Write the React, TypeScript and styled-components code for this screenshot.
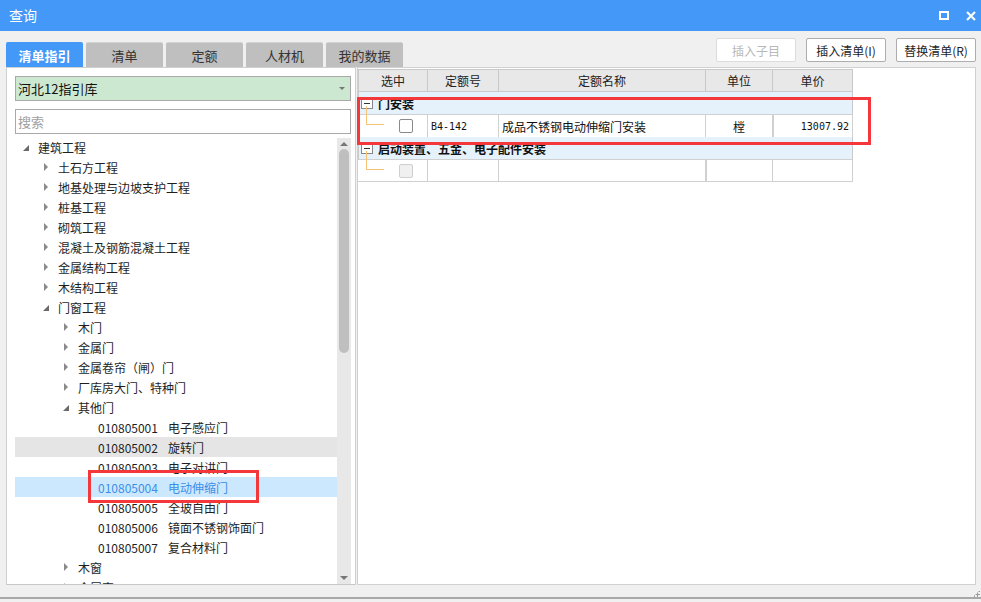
import React from "react";
import styled, { createGlobalStyle } from "styled-components";

const Global = createGlobalStyle`
  html, body { margin: 0; padding: 0; }
  body { font-family: "Noto Sans CJK SC", "Noto Sans", sans-serif; font-size: 12px; color: #1e1e1e; }
  * { box-sizing: border-box; }
`;

const Window = styled.div`
  width: 981px;
  height: 602px;
  background: #f0f0f0;
  display: flex;
  flex-direction: column;
  overflow: hidden;
  position: relative;
`;

const TitleBar = styled.div`
  height: 31px;
  background: #4499f8;
  display: flex;
  align-items: center;
  padding: 0 6px 0 9px;
  color: #fff;
  font-size: 14px;
`;

const Title = styled.div`
  flex: 1;
  line-height: 1;
  margin-top: -1px;
`;

const TitleIcons = styled.div`
  display: flex;
  align-items: center;
  gap: 17px;
  margin-right: -1px;
`;

const ToolRow = styled.div`
  height: 36px;
  display: flex;
  align-items: flex-end;
  padding: 0 5px 0 6px;
`;

const Tabs = styled.div`
  display: flex;
  gap: 3px;
  align-items: flex-end;
`;

const Tab = styled.div<{ $active?: boolean }>`
  width: 77px;
  height: 25px;
  display: flex;
  align-items: center;
  justify-content: center;
  background: ${(p) => (p.$active ? "#4499f8" : "#bfbfbf")};
  color: ${(p) => (p.$active ? "#fff" : "#333")};
  font-size: 13px;
  font-weight: ${(p) => (p.$active ? 700 : 400)};
  border-radius: 2px 2px 0 0;
  border-top: 1px solid ${(p) => (p.$active ? "#4499f8" : "#d2d2d2")};
`;

const Spacer = styled.div`flex: 1;`;

const Buttons = styled.div`
  display: flex;
  gap: 10px;
  align-self: flex-start;
  margin-top: 7px;
`;

const Btn = styled.div<{ $disabled?: boolean; $w: number }>`
  width: ${(p) => p.$w}px;
  height: 24px;
  display: flex;
  align-items: center;
  justify-content: center;
  background: #fff;
  border: 1px solid ${(p) => (p.$disabled ? "#dcdcdc" : "#adadad")};
  border-radius: 2px;
  color: ${(p) => (p.$disabled ? "#b8b8b8" : "#1e1e1e")};
  font-size: 12px;
`;

const Main = styled.div`
  height: 518px;
  display: flex;
  padding: 0 5px 0 6px;
  gap: 1px;
`;

const LeftPanel = styled.div`
  width: 350px;
  background: #fff;
  border: 1px solid #d0d0d0;
  border-bottom-color: #c8c8c8;
  display: flex;
  flex-direction: column;
  padding: 8px 4px 0 8px;
`;

const Select = styled.div`
  height: 25px;
  background: #cde8d0;
  border: 1px solid #a9a9a9;
  display: flex;
  align-items: center;
  padding: 0 5px 0 2px;
  font-size: 13px;
  color: #111;
`;

const Caret = styled.div`
  margin-left: auto;
  width: 0;
  height: 0;
  border-left: 3px solid transparent;
  border-right: 3px solid transparent;
  border-top: 3px solid #777;
`;

const Search = styled.div`
  height: 25px;
  margin-top: 8px;
  border: 1px solid #a9a9a9;
  display: flex;
  align-items: center;
  padding: 0 2px;
  color: #a0a0a0;
  font-size: 13px;
`;

const TreeWrap = styled.div`
  flex: 1;
  margin-top: 4px;
  display: flex;
  overflow: hidden;
  min-height: 0;
`;

const TreeList = styled.div`
  flex: 1;
  overflow: hidden;
  margin-top: -1px;
`;

const Row = styled.div<{ $level: number; $state?: "hover" | "sel" }>`
  height: 20px;
  display: flex;
  align-items: center;
  padding-left: ${(p) => 6 + p.$level * 20}px;
  background: ${(p) => (p.$state === "hover" ? "#e5e5e5" : p.$state === "sel" ? "#cce8ff" : "transparent")};
  color: ${(p) => (p.$state === "sel" ? "#3b8fe6" : "#1e1e1e")};
  font-size: 12px;
  white-space: nowrap;
`;

const Arrow = styled.span<{ $open?: boolean; $none?: boolean }>`
  width: 17px;
  height: 20px;
  flex: none;
  position: relative;
  &::before {
    content: "";
    display: ${(p) => (p.$none ? "none" : "block")};
    position: absolute;
    ${(p) =>
      p.$open
        ? `left: 2px; top: 8px; width: 0; height: 0;
           border-left: 6px solid transparent; border-bottom: 6px solid #6a6a6a;`
        : `left: 3px; top: 6px; width: 0; height: 0;
           border-top: 4px solid transparent; border-bottom: 4px solid transparent; border-left: 4px solid #8a8a8a;`}
  }
`;

const Code = styled.span`
  margin-right: 10px;
`;

const ScrollBar = styled.div`
  width: 14px;
  background: #e8e8e8;
  display: flex;
  flex-direction: column;
  align-items: center;
  padding: 4px 0;
`;

const ScrollArrow = styled.div<{ $down?: boolean }>`
  width: 0;
  height: 0;
  border-left: 4px solid transparent;
  border-right: 4px solid transparent;
  ${(p) => (p.$down ? "border-top: 4px solid #777;" : "border-bottom: 4px solid #777;")}
`;

const Thumb = styled.div`
  width: 10px;
  height: 204px;
  margin-top: 3px;
  background: #bfbfbf;
  border-radius: 5px;
`;

const RightPanel = styled.div`
  flex: 1;
  background: #fff;
  border: 1px solid #d0d0d0;
  padding-top: 1px;
`;

const Table = styled.div`
  width: 496px;
  display: grid;
  grid-template-columns: 70px 71px 207px 67px 80px;
`;

const HCell = styled.div`
  height: 23px;
  background: #e8e8e8;
  border: solid #c9c9c9;
  border-width: 1px 1px 1px 0;
  display: flex;
  align-items: center;
  justify-content: center;
  font-size: 12px;
  color: #222;
  &:first-child { border-left-width: 1px; }
`;

const GroupRow = styled.div`
  grid-column: 1 / -1;
  height: 22px;
  background: #e5f2fc;
  border-left: 1px solid #c9c9c9;
  border-right: 1px solid #c9c9c9;
  display: flex;
  align-items: center;
  padding-left: 2px;
  font-weight: 700;
  font-size: 12px;
  color: #111;
`;

const MinusBox = styled.div`
  width: 12px;
  height: 11px;
  border: 1px solid #888;
  background: #fff;
  margin-right: 5px;
  position: relative;
  &::after {
    content: "";
    position: absolute;
    left: 2px;
    right: 2px;
    top: 4px;
    height: 1px;
    background: #333;
  }
`;

const Cell = styled.div<{ $align?: "left" | "center" | "right"; $mono?: boolean }>`
  height: 23px;
  border: solid #d0d0d0;
  border-width: 1px 1px 0 0;
  display: flex;
  align-items: center;
  justify-content: ${(p) => (p.$align === "right" ? "flex-end" : p.$align === "center" ? "center" : "flex-start")};
  padding: 0 3px;
  font-family: ${(p) => (p.$mono ? `"DejaVu Sans Mono", "Liberation Mono", monospace` : `"Noto Sans CJK SC", sans-serif`)};
  font-size: ${(p) => (p.$mono ? "10px" : "12px")};
  color: #111;
  position: relative;
  &:nth-child(5n + 1) { border-left-width: 1px; }
`;

const LastRowCell = styled(Cell)`
  border-bottom-width: 1px;
`;

const Connector = styled.div`
  position: absolute;
  left: 8px;
  top: -9px;
  width: 18px;
  height: 19px;
  border-left: 1px solid #f5c277;
  border-bottom: 1px solid #f5c277;
`;

const Check = styled.div<{ $disabled?: boolean }>`
  width: 14px;
  height: 14px;
  margin-left: 38px;
  border: 1px solid ${(p) => (p.$disabled ? "#cfcfcf" : "#8a8a8a")};
  border-radius: 2px;
  background: ${(p) => (p.$disabled ? "#f0f0f0" : "#fff")};
`;

const Footer = styled.div`
  flex: 1;
  position: relative;
  padding-bottom: 3px;
  display: flex;
  flex-direction: column;
`;

const FooterLine = styled.div`
  margin-top: auto;
  height: 2px;
  background: #a8a8a8;
`;

const Grip = styled.div`
  position: absolute;
  right: 1px;
  bottom: 5px;
  width: 7px;
  height: 7px;
  background:
    radial-gradient(circle, #999 0 1px, transparent 1.2px) 0 0 / 3px 3px;
  clip-path: polygon(100% 0, 100% 100%, 0 100%);
`;

const RedBox = styled.div<{ $x: number; $y: number; $w: number; $h: number }>`
  position: absolute;
  left: ${(p) => p.$x}px;
  top: ${(p) => p.$y}px;
  width: ${(p) => p.$w}px;
  height: ${(p) => p.$h}px;
  border: 3px solid #f3373a;
  pointer-events: none;
`;

type Node = { label: string; level: number; code?: string; open?: boolean; leaf?: boolean; state?: "hover" | "sel" };

const tree: Node[] = [
  { label: "建筑工程", level: 0, open: true },
  { label: "土石方工程", level: 1 },
  { label: "地基处理与边坡支护工程", level: 1 },
  { label: "桩基工程", level: 1 },
  { label: "砌筑工程", level: 1 },
  { label: "混凝土及钢筋混凝土工程", level: 1 },
  { label: "金属结构工程", level: 1 },
  { label: "木结构工程", level: 1 },
  { label: "门窗工程", level: 1, open: true },
  { label: "木门", level: 2 },
  { label: "金属门", level: 2 },
  { label: "金属卷帘（闸）门", level: 2 },
  { label: "厂库房大门、特种门", level: 2 },
  { label: "其他门", level: 2, open: true },
  { code: "010805001", label: "电子感应门", level: 3, leaf: true },
  { code: "010805002", label: "旋转门", level: 3, leaf: true, state: "hover" },
  { code: "010805003", label: "电子对讲门", level: 3, leaf: true },
  { code: "010805004", label: "电动伸缩门", level: 3, leaf: true, state: "sel" },
  { code: "010805005", label: "全玻自由门", level: 3, leaf: true },
  { code: "010805006", label: "镜面不锈钢饰面门", level: 3, leaf: true },
  { code: "010805007", label: "复合材料门", level: 3, leaf: true },
  { label: "木窗", level: 2 },
  { label: "金属窗", level: 2 },
];

export default function App() {
  return (
    <>
      <Global />
      <Window>
        <TitleBar>
          <Title>查询</Title>
          <TitleIcons>
            <svg width="10" height="9" viewBox="0 0 10 9">
              <rect x="1" y="1" width="8" height="7" fill="none" stroke="#fff" strokeWidth="2" />
            </svg>
            <svg width="10" height="10" viewBox="0 0 10 10">
              <path d="M1 1L9 9M9 1L1 9" stroke="#fff" strokeWidth="2" />
            </svg>
          </TitleIcons>
        </TitleBar>
        <ToolRow>
          <Tabs>
            <Tab $active>清单指引</Tab>
            <Tab>清单</Tab>
            <Tab>定额</Tab>
            <Tab>人材机</Tab>
            <Tab>我的数据</Tab>
          </Tabs>
          <Spacer />
          <Buttons>
            <Btn $disabled $w={80}>插入子目</Btn>
            <Btn $w={80}>插入清单(I)</Btn>
            <Btn $w={80}>替换清单(R)</Btn>
          </Buttons>
        </ToolRow>
        <Main>
          <LeftPanel>
            <Select>
              河北12指引库
              <Caret />
            </Select>
            <Search>搜索</Search>
            <TreeWrap>
              <TreeList>
                {tree.map((n, i) => (
                  <Row key={i} $level={n.level} $state={n.state}>
                    <Arrow $open={n.open} $none={n.leaf} />
                    {n.code && <Code>{n.code}</Code>}
                    {n.label}
                  </Row>
                ))}
              </TreeList>
              <ScrollBar>
                <ScrollArrow />
                <Thumb />
                <Spacer />
                <ScrollArrow $down />
              </ScrollBar>
            </TreeWrap>
          </LeftPanel>
          <RightPanel>
            <Table>
              <HCell>选中</HCell>
              <HCell>定额号</HCell>
              <HCell>定额名称</HCell>
              <HCell>单位</HCell>
              <HCell>单价</HCell>
              <GroupRow>
                <MinusBox />
                门安装
              </GroupRow>
              <Cell>
                <Connector />
                <Check />
              </Cell>
              <Cell $mono>B4-142</Cell>
              <Cell>成品不锈钢电动伸缩门安装</Cell>
              <Cell $align="center">樘</Cell>
              <Cell $align="right" $mono>13007.92</Cell>
              <GroupRow>
                <MinusBox />
                启动装置、五金、电子配件安装
              </GroupRow>
              <LastRowCell>
                <Connector />
                <Check $disabled />
              </LastRowCell>
              <LastRowCell />
              <LastRowCell />
              <LastRowCell />
              <LastRowCell />
            </Table>
          </RightPanel>
        </Main>
        <Footer>
          <FooterLine />
          <Grip />
        </Footer>
        <RedBox $x={357} $y={97} $w={514} $h={48} />
        <RedBox $x={88} $y={470} $w={171} $h={33} />
      </Window>
    </>
  );
}
